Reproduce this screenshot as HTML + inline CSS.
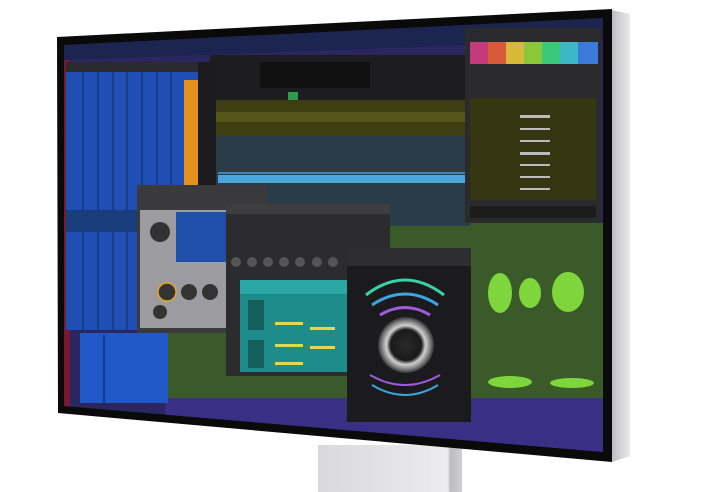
<!DOCTYPE html>
<html><head><meta charset="utf-8"><style>
html,body{margin:0;padding:0;background:#fff;width:705px;height:492px;overflow:hidden;font-family:"Liberation Sans",sans-serif}
</style></head><body>
<svg width="705" height="492" viewBox="0 0 705 492" xmlns="http://www.w3.org/2000/svg">
<defs>
<linearGradient id="stand" x1="0" x2="1"><stop offset="0" stop-color="#d9d9db"/><stop offset="0.9" stop-color="#ececee"/><stop offset="0.92" stop-color="#bdbdc0"/><stop offset="1" stop-color="#cfcfd2"/></linearGradient>
<linearGradient id="side" x1="0" x2="1"><stop offset="0" stop-color="#bfbfc2"/><stop offset="1" stop-color="#e9e9eb"/></linearGradient>
<radialGradient id="knob"><stop offset="0" stop-color="#2a2a2a"/><stop offset="0.55" stop-color="#1a1a1a"/><stop offset="0.7" stop-color="#d0d0d0"/><stop offset="0.85" stop-color="#888"/><stop offset="1" stop-color="#333"/></radialGradient>
<clipPath id="scr"><polygon points="64,45 603,18 603,452 64,406"/></clipPath>
</defs>
<rect x="318" y="445" width="144" height="47" fill="url(#stand)"/>
<polygon points="612,10 630,14 630,456 612,462" fill="url(#side)"/>
<polygon points="57,37 612,9 612,462 58,413" fill="#0a0a0a"/>
<g clip-path="url(#scr)">
<rect x="64" y="18" width="540" height="440" fill="#2b2560"/>
<polygon points="64,45 603,18 603,40 64,60" fill="#1b2550"/>
<rect x="64" y="60" width="6" height="350" fill="#7a1830"/>
<rect x="210" y="55" width="260" height="45" fill="#1d1d20"/>
<rect x="260" y="62" width="110" height="26" fill="#111"/>
<rect x="288" y="92" width="10" height="10" fill="#2c9c4c"/>
<rect x="215" y="100" width="255" height="36" fill="#3e3e12"/>
<rect x="215" y="112" width="255" height="10" fill="#55551a"/>
<rect x="215" y="136" width="255" height="90" fill="#2a3c48"/>
<rect x="218" y="175" width="250" height="8" fill="#4ba6dc"/>
<rect x="218" y="172" width="250" height="2" fill="#3b86b6"/>
<rect x="66" y="62" width="150" height="268" fill="#1f4fb4"/>
<rect x="66" y="62" width="150" height="10" fill="#2a2a30"/>
<g fill="#173c8a"><rect x="82" y="72" width="2" height="258"/><rect x="97" y="72" width="2" height="258"/><rect x="112" y="72" width="2" height="258"/><rect x="126" y="72" width="2" height="258"/><rect x="141" y="72" width="2" height="258"/><rect x="156" y="72" width="2" height="258"/><rect x="170" y="72" width="2" height="258"/></g>
<rect x="184" y="80" width="14" height="135" fill="#e6911e"/>
<rect x="198" y="62" width="18" height="200" fill="#1b1b1e"/>
<rect x="66" y="210" width="118" height="22" fill="#183c7c"/>
<rect x="465" y="28" width="136" height="195" fill="#2b2b2d"/>
<g><rect x="470" y="42" width="18" height="22" fill="#c43a7a"/><rect x="488" y="42" width="18" height="22" fill="#d85a3a"/><rect x="506" y="42" width="18" height="22" fill="#d8b83a"/><rect x="524" y="42" width="18" height="22" fill="#8ac83a"/><rect x="542" y="42" width="18" height="22" fill="#3ac87a"/><rect x="560" y="42" width="18" height="22" fill="#3ab8c8"/><rect x="578" y="42" width="20" height="22" fill="#3a7ad8"/></g>
<rect x="470" y="98" width="126" height="102" fill="#363612"/>
<g fill="#bbb"><rect x="520" y="115" width="30" height="3"/><rect x="520" y="128" width="30" height="2"/><rect x="520" y="140" width="30" height="2"/><rect x="520" y="152" width="30" height="3"/><rect x="520" y="164" width="30" height="2"/><rect x="520" y="176" width="30" height="2"/><rect x="520" y="188" width="30" height="2"/></g>
<rect x="470" y="206" width="126" height="12" fill="#1c1c1c"/>
<rect x="470" y="223" width="135" height="175" fill="#3a5a2a"/>
<rect x="380" y="226" width="92" height="172" fill="#3a5a2a"/>
<g fill="#7fd63c"><ellipse cx="500" cy="293" rx="12" ry="20"/><ellipse cx="530" cy="293" rx="11" ry="15"/><ellipse cx="568" cy="292" rx="16" ry="20"/><ellipse cx="510" cy="382" rx="22" ry="6"/><ellipse cx="572" cy="383" rx="22" ry="5"/></g>
<rect x="165" y="330" width="215" height="68" fill="#3b5a2c"/>
<rect x="165" y="398" width="440" height="60" fill="#3a2f84"/>
<rect x="80" y="333" width="88" height="70" fill="#2058c8"/>
<rect x="103" y="335" width="2" height="68" fill="#143c88"/>
<rect x="137" y="185" width="130" height="148" fill="#3a3a3c"/>
<rect x="140" y="210" width="88" height="118" fill="#9c9ca0"/>
<rect x="176" y="212" width="50" height="50" fill="#1f4fa8"/>
<circle cx="160" cy="232" r="10" fill="#333"/><circle cx="167" cy="292" r="9" fill="#333" stroke="#e6a420" stroke-width="1.5"/><circle cx="189" cy="292" r="8" fill="#333"/><circle cx="210" cy="292" r="8" fill="#333"/><circle cx="160" cy="312" r="7" fill="#333"/>
<rect x="226" y="204" width="164" height="172" fill="#2c2c2e"/>
<rect x="226" y="204" width="164" height="10" fill="#3e3e40"/>
<g fill="#555"><circle cx="236" cy="262" r="5"/><circle cx="252" cy="262" r="5"/><circle cx="268" cy="262" r="5"/><circle cx="284" cy="262" r="5"/><circle cx="300" cy="262" r="5"/><circle cx="317" cy="262" r="5"/><circle cx="333" cy="262" r="5"/></g>
<rect x="240" y="280" width="108" height="92" fill="#1e8c8a"/>
<rect x="240" y="280" width="108" height="14" fill="#2aa8a4"/>
<g fill="#e2d84a"><rect x="275" y="322" width="28" height="3"/><rect x="310" y="327" width="25" height="3"/><rect x="275" y="344" width="28" height="3"/><rect x="310" y="346" width="25" height="3"/><rect x="275" y="362" width="28" height="3"/></g>
<rect x="248" y="300" width="16" height="30" fill="#155e5c"/><rect x="248" y="340" width="16" height="28" fill="#155e5c"/>
<rect x="347" y="248" width="124" height="174" fill="#1b1b1d"/>
<rect x="347" y="248" width="124" height="18" fill="#2e2e30"/>
<path d="M366 295 Q405 265 444 295" fill="none" stroke="#3ad0a8" stroke-width="3"/>
<path d="M372 305 Q405 283 438 305" fill="none" stroke="#3aa6e0" stroke-width="3"/>
<path d="M380 315 Q405 300 430 315" fill="none" stroke="#a05ae0" stroke-width="3"/>
<circle cx="406" cy="345" r="28" fill="url(#knob)"/>
<path d="M372 385 Q405 405 438 385" fill="none" stroke="#3aa6e0" stroke-width="2"/>
<path d="M370 375 Q405 395 440 375" fill="none" stroke="#a05ae0" stroke-width="2"/>
</g>
</svg>
</body></html>
